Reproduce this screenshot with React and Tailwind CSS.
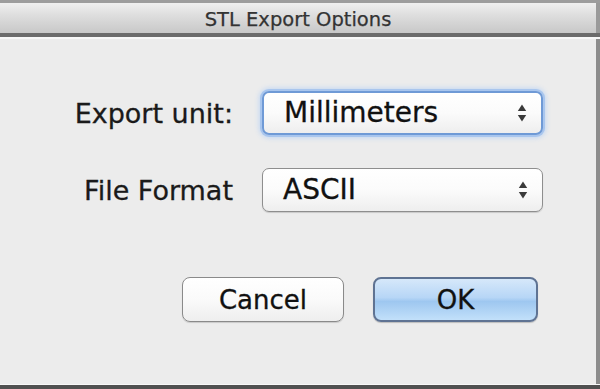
import React from 'react';

const font = { fontFamily: '"DejaVu Sans", "Liberation Sans", sans-serif' };

function Arrows() {
  return (
    <svg width="10" height="22" viewBox="0 0 10 22" className="shrink-0">
      <path d="M5 2.5 L9.2 9 L0.8 9 Z" fill="#3a3a3a" />
      <path d="M5 19.5 L9.2 13 L0.8 13 Z" fill="#3a3a3a" />
    </svg>
  );
}

function Select({ value, focused }) {
  return (
    <div
      className={`ml-[29px] w-[281px] h-[44px] flex items-center justify-between pl-[20px] pr-[14px] rounded-[7px] bg-[linear-gradient(to_bottom,#ffffff_0%,#fbfbfb_50%,#eeeeee_100%)] ${
        focused
          ? 'border-2 border-[#6f9ad6] shadow-[0_0_0_2px_#a9c6ee,0_0_5px_3px_#c3d7f2]'
          : 'border border-[#8e8e8e] shadow-[0_1px_1px_rgba(0,0,0,0.15)]'
      }`}
    >
      <span className="text-[28px] leading-none text-[#111] [-webkit-text-stroke:0.3px_#111]">{value}</span>
      <Arrows />
    </div>
  );
}

function Row({ label, value, focused, className }) {
  return (
    <div className={`flex items-center ${className}`}>
      <div className="w-[233px] text-right text-[27px] leading-none text-[#1a1a1a] [-webkit-text-stroke:0.3px_#1a1a1a]">
        {label}
      </div>
      <Select value={value} focused={focused} />
    </div>
  );
}

export default function App() {
  return (
    <div className="w-[600px] h-[389px] flex flex-col overflow-hidden bg-[#ececec]" style={font}>
      {/* edge of the window behind */}
      <div className="h-[3px] bg-[#9d9d9d]" />

      {/* title bar */}
      <div className="h-[30px] flex items-center justify-center bg-[linear-gradient(to_bottom,#f0f0f0_0%,#dedede_40%,#c8c8c8_100%)] border-r-[4px] border-[#9a9a9a]">
        <span className="text-[19.5px] leading-none text-[#333] pt-[3px] [-webkit-text-stroke:0.25px_#333]">
          STL Export Options
        </span>
      </div>
      <div className="h-[4px] bg-[#6b6b6b]" />
      <div className="h-[2px] bg-[#f7f7f7]" />

      {/* body */}
      <div className="flex-1 flex flex-col bg-[#ececec] border-r-[4px] border-[#8c8c8c]">
        <Row label="Export unit:" value="Millimeters" focused className="mt-[52px]" />
        <Row label="File Format" value="ASCII" className="mt-[33px]" />

        <div className="flex mt-[65px] ml-[182px] gap-[29px]">
          <button className="w-[162px] h-[45px] rounded-[8px] border-[1.5px] border-[#8a8a8a] bg-[linear-gradient(to_bottom,#ffffff_0%,#fafafa_50%,#eeeeee_100%)] shadow-[0_1px_1px_rgba(0,0,0,0.15)] text-[26px] leading-none text-[#111] [-webkit-text-stroke:0.3px_#111]">
            Cancel
          </button>
          <button className="w-[165px] h-[45px] rounded-[8px] border-[2px] border-[#5f7393] bg-[linear-gradient(to_bottom,#d6e8fa_0%,#b7d6f6_45%,#9ec7f0_55%,#c2e0fa_100%)] shadow-[0_1px_1px_rgba(0,0,0,0.2)] text-[26px] leading-none text-[#111] [-webkit-text-stroke:0.3px_#111]">
            OK
          </button>
        </div>
      </div>

      <div className="h-[1px] bg-[#f8f8f8]" />
      <div className="h-[4px] bg-[#505050]" />
    </div>
  );
}
